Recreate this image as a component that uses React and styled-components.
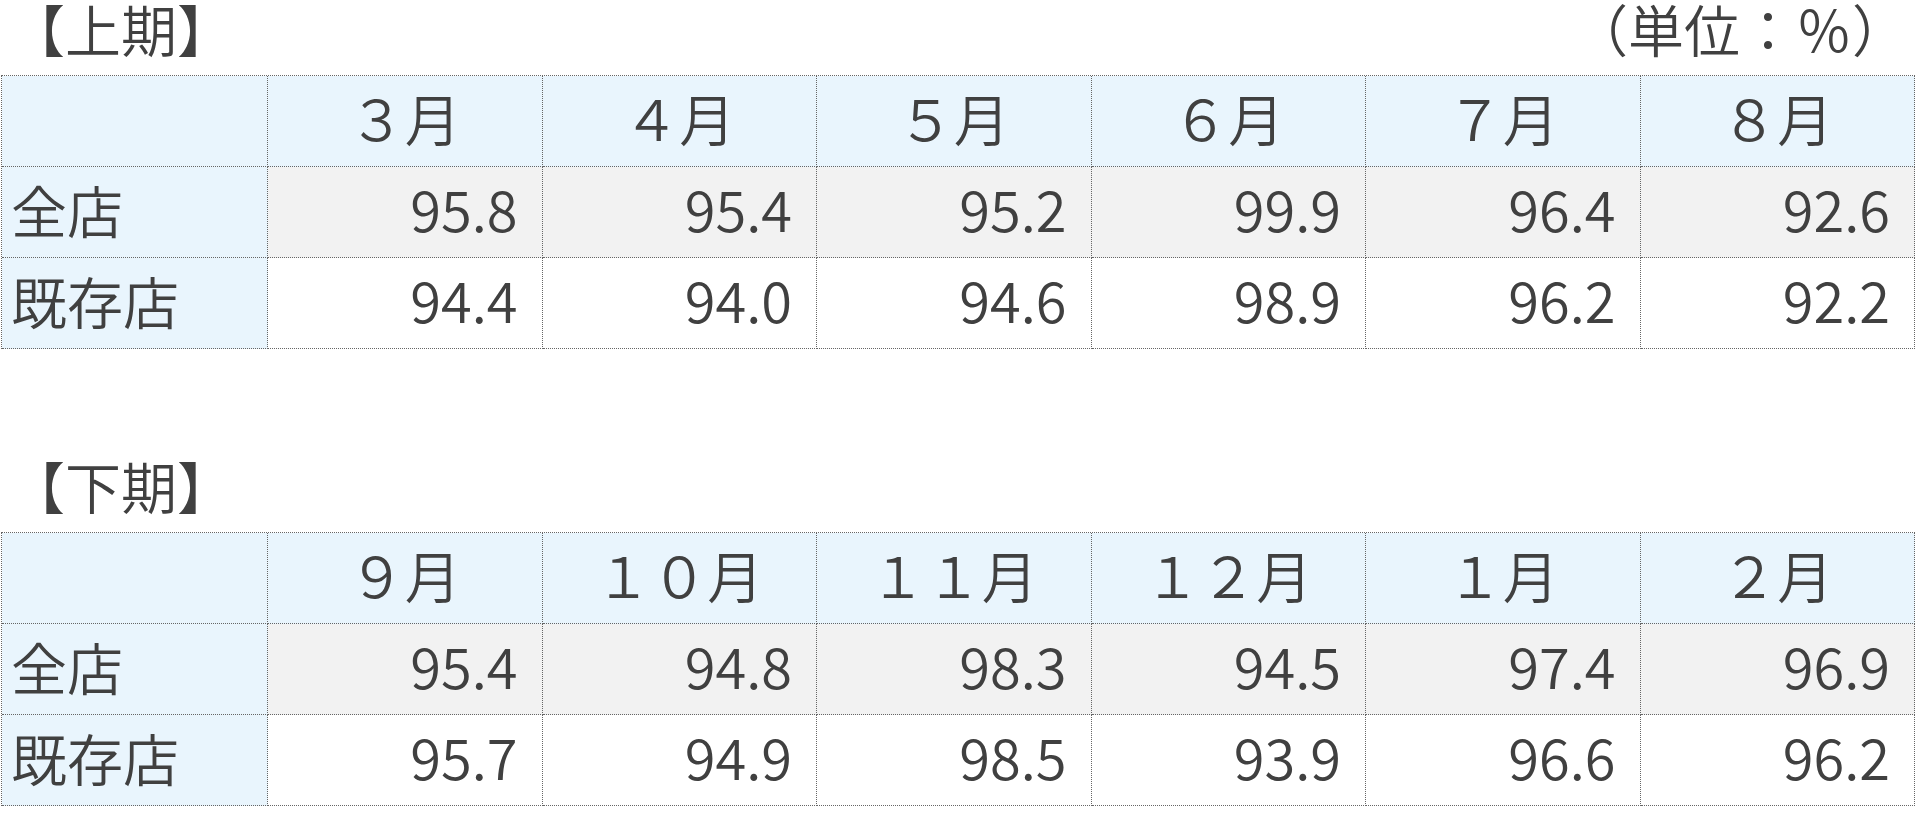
import styled, { createGlobalStyle } from 'styled-components'

const GlobalStyle = createGlobalStyle`
  body {
    margin: 0;
    background: #fff;
    font-family: "Noto Sans CJK JP", "Noto Sans", sans-serif;
    color: #404040;
  }
`

const Page = styled.div`
  width: 1920px;
  padding-left: 1px;
  box-sizing: border-box;
`

const Section = styled.section`
  margin-bottom: ${p => p.$gap || 0}px;
`

const TitleRow = styled.div`
  height: 75px;
  display: flex;
  justify-content: space-between;
  align-items: flex-start;
  font-size: 56px;
  line-height: 56px;
  font-weight: 350;
  padding: 0 12px 0 8px;
  box-sizing: border-box;
`

const Title = styled.h2`
  margin: 0;
  font-size: inherit;
  font-weight: inherit;
`

const Unit = styled.span``

const Grid = styled.div`
  width: 1914px;
  display: grid;
  grid-template-columns: 266px repeat(6, 1fr);
  grid-auto-rows: 91px;
  border-top: 1px dotted #666;
  border-left: 1px dotted #666;
  box-sizing: border-box;
`

const Cell = styled.div`
  box-sizing: border-box;
  border-right: 1px dotted #666;
  border-bottom: 1px dotted #666;
  display: flex;
  align-items: center;
  font-size: 56px;
  font-weight: 350;
  line-height: 1;
  background: ${p => p.$bg};
`

const HeadCell = styled(Cell)`
  justify-content: center;
  padding-bottom: 8px;
`

const LabelCell = styled(Cell)`
  padding-left: 9px;
  padding-bottom: 6px;
`

const ValueCell = styled(Cell)`
  justify-content: flex-end;
  padding-right: 24px;
  padding-bottom: 9px;
`

const BLUE = '#e9f5fd'
const GREY = '#f2f2f2'
const WHITE = '#ffffff'

const first = {
  months: ['３月', '４月', '５月', '６月', '７月', '８月'],
  rows: [
    { label: '全店', values: ['95.8', '95.4', '95.2', '99.9', '96.4', '92.6'], bg: GREY },
    { label: '既存店', values: ['94.4', '94.0', '94.6', '98.9', '96.2', '92.2'], bg: WHITE },
  ],
}

const second = {
  months: ['９月', '１０月', '１１月', '１２月', '１月', '２月'],
  rows: [
    { label: '全店', values: ['95.4', '94.8', '98.3', '94.5', '97.4', '96.9'], bg: GREY },
    { label: '既存店', values: ['95.7', '94.9', '98.5', '93.9', '96.6', '96.2'], bg: WHITE },
  ],
}

const RateTable = ({ data }) => (
  <Grid>
    <HeadCell $bg={BLUE} />
    {data.months.map(m => (
      <HeadCell key={m} $bg={BLUE}>{m}</HeadCell>
    ))}
    {data.rows.map(row => [
      <LabelCell key={row.label} $bg={BLUE}>{row.label}</LabelCell>,
      ...row.values.map((v, i) => (
        <ValueCell key={row.label + i} $bg={row.bg}>{v}</ValueCell>
      )),
    ])}
  </Grid>
)

const App = () => (
  <Page>
    <GlobalStyle />
    <Section $gap={108}>
      <TitleRow>
        <Title>【上期】</Title>
        <Unit>（単位：％）</Unit>
      </TitleRow>
      <RateTable data={first} />
    </Section>
    <Section>
      <TitleRow>
        <Title>【下期】</Title>
      </TitleRow>
      <RateTable data={second} />
    </Section>
  </Page>
)

export default App
